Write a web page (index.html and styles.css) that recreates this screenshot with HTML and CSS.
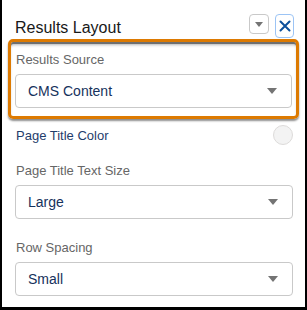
FILE: index.html
```html
<!DOCTYPE html>
<html lang="en">
<head>
    <meta charset="UTF-8">
    <meta name="viewport" content="width=device-width, initial-scale=1.0">
    <title>Results Layout</title>
    <link rel="stylesheet" href="styles.css">
</head>
<body>
    <div class="panel">
        <div class="panel-header">
            <h1>Results Layout</h1>
            <button class="icon-btn menu-btn"><span class="caret"></span></button>
            <button class="icon-btn close-btn">
                <svg width="12" height="12" viewBox="0 0 12 12">
                    <path d="M1.5 1.5 L10.5 10.5 M10.5 1.5 L1.5 10.5" stroke="#0b4f9c" stroke-width="2" stroke-linecap="round"/>
                </svg>
            </button>
        </div>

        <div class="highlight">
            <div class="form-group">
                <label>Results Source</label>
                <div class="select">
                    <span>CMS Content</span>
                    <span class="caret"></span>
                </div>
            </div>
        </div>

        <div class="panel-body">
            <div class="color-row">
                <span>Page Title Color</span>
                <span class="swatch"></span>
            </div>

            <div class="form-group">
                <label>Page Title Text Size</label>
                <div class="select">
                    <span>Large</span>
                    <span class="caret"></span>
                </div>
            </div>

            <div class="form-group">
                <label>Row Spacing</label>
                <div class="select">
                    <span>Small</span>
                    <span class="caret"></span>
                </div>
            </div>
        </div>
    </div>
</body>
</html>
```

FILE: styles.css
```css
* {
    box-sizing: border-box;
    margin: 0;
    padding: 0;
}
body {
    font-family: 'Liberation Sans', Arial, sans-serif;
    background: #fff;
    color: #181818;
}
.panel {
    width: 307px;
    height: 310px;
    border: 2px solid #000;
    border-top: none;
    border-bottom-width: 3px;
    overflow: hidden;
}
.panel-header {
    display: flex;
    align-items: flex-start;
    padding: 14px 11px 0 13px;
    height: 39px;
}
.panel-header h1 {
    flex: 1;
    font-size: 16px;
    font-weight: 400;
    line-height: 20px;
    padding-top: 4px;
}
.icon-btn {
    background: #fff;
    border: 1px solid #c9c9c9;
    border-radius: 4px;
    display: flex;
    align-items: center;
    justify-content: center;
    cursor: pointer;
}
.menu-btn {
    width: 20px;
    height: 20px;
}
.menu-btn .caret {
    border-left: 4px solid transparent;
    border-right: 4px solid transparent;
    border-top: 5px solid #747474;
}
.close-btn {
    width: 19px;
    height: 24px;
    margin-left: 6px;
    border-color: #9cc4f5;
}
.highlight {
    margin: 0 6px;
    border: 3px solid #dd7a01;
    border-radius: 5px;
    padding: 9px 4px 8px;
    box-shadow: inset 0 2px 0 #6f6f6f, inset 0 4px 3px -1px rgba(0,0,0,0.3), 0 2px 2px rgba(0,0,0,0.45);
}
.panel-body {
    padding: 6px 12px 0 13px;
}
.form-group label {
    display: block;
    font-size: 13px;
    line-height: 18px;
    color: #666;
    padding-left: 1px;
    margin-bottom: 5px;
}
.panel-body .form-group {
    margin-bottom: 20px;
}
.select {
    height: 34px;
    border: 1px solid #c9c9c9;
    border-radius: 4px;
    display: flex;
    align-items: center;
    justify-content: space-between;
    padding: 0 14px 0 12px;
    font-size: 14px;
    color: #16325c;
}
.select .caret {
    border-left: 5px solid transparent;
    border-right: 5px solid transparent;
    border-top: 6px solid #747474;
}
.color-row {
    display: flex;
    align-items: center;
    justify-content: space-between;
    height: 20px;
    margin-bottom: 17px;
    padding-left: 1px;
    font-size: 13px;
    color: #1f3d6b;
}
.swatch {
    width: 20px;
    height: 20px;
    border-radius: 50%;
    background: #f3f3f3;
    border: 1px solid #dddbda;
}
```
